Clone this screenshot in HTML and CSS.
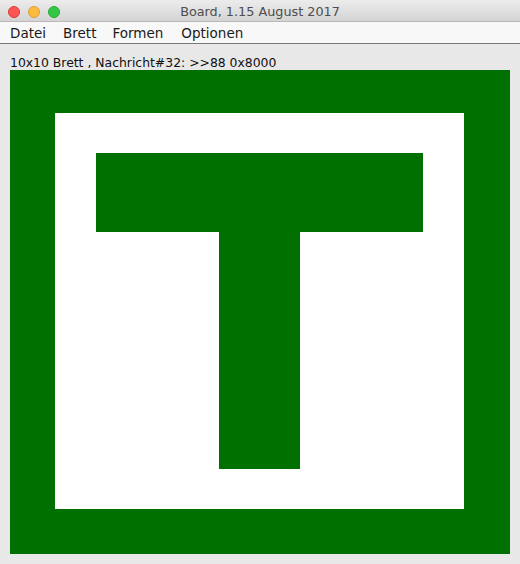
FILE: index.html
```html
<!DOCTYPE html>
<html>
<head>
<meta charset="utf-8">
<link rel="stylesheet" href="styles.css">
</head>
<body>
<div class="window">
  <div class="titlebar">
    <div class="lights">
      <span class="light red"></span>
      <span class="light yellow"></span>
      <span class="light green"></span>
    </div>
    <div class="title">Board, 1.15 August 2017</div>
  </div>
  <div class="menubar">
    <span class="menu m1">Datei</span>
    <span class="menu m2">Brett</span>
    <span class="menu m3">Formen</span>
    <span class="menu m4">Optionen</span>
  </div>
  <div class="content">
    <div class="status">10x10 Brett , Nachricht#32: &gt;&gt;88 0x8000</div>
    <div class="board">
      <div class="inner">
        <div class="tbar"></div>
        <div class="tstem"></div>
      </div>
    </div>
  </div>
</div>
</body>
</html>
```

FILE: styles.css
```css
html, body {
  margin: 0;
  padding: 0;
  background: #e8e8e8;
}
.window {
  width: 520px;
  height: 564px;
  display: flex;
  flex-direction: column;
  font-family: "DejaVu Sans", "Liberation Sans", sans-serif;
}
.titlebar {
  position: relative;
  height: 21px;
  border-bottom: 1px solid #b9b9b9;
  background: linear-gradient(#ececec, #d4d4d4);
  display: flex;
  align-items: center;
  justify-content: center;
}
.lights {
  position: absolute;
  left: 8px;
  top: 6px;
  display: flex;
  gap: 8px;
}
.light {
  width: 12px;
  height: 12px;
  border-radius: 50%;
  box-sizing: border-box;
}
.red { background: #fc5753; border: 1px solid #df3d39; }
.yellow { background: #fdbc40; border: 1px solid #de9f2f; }
.green { background: #33c748; border: 1px solid #27aa35; }
.title {
  font-size: 12.8px;
  color: #4d4d4d;
  padding-top: 1px;
}
.menubar {
  height: 20px;
  background: #f8f8f8;
  border-bottom: 1px solid #7a7a7a;
  display: flex;
  align-items: center;
  font-size: 13.5px;
  color: #1a1a1a;
  padding-top: 1px;
}
.m1 { margin-left: 10px; }
.m2 { margin-left: 17px; }
.m3 { margin-left: 16px; }
.m4 { margin-left: 18px; }
.content {
  padding-left: 10px;
  display: flex;
  flex-direction: column;
}
.status {
  height: 26px;
  font-size: 12.4px;
  line-height: 14px;
  padding-top: 12px;
  box-sizing: border-box;
  color: #111;
}
.board {
  width: 500px;
  height: 484px;
  background: #007000;
  box-sizing: border-box;
  padding: 43px 0 0 45px;
}
.inner {
  width: 409px;
  height: 396px;
  background: #ffffff;
  box-sizing: border-box;
  padding: 40px 0 0 41px;
  display: flex;
  flex-direction: column;
}
.tbar {
  width: 327px;
  height: 79px;
  background: #007000;
}
.tstem {
  width: 81px;
  height: 237px;
  margin-left: 123px;
  background: #007000;
}
```
